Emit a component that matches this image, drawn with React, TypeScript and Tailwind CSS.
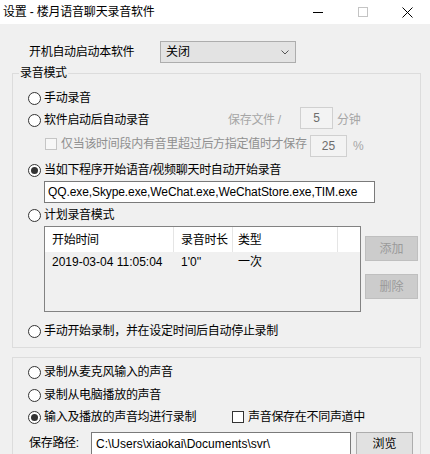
import React from "react";

const font = "font-['Liberation_Sans','Noto_Sans_CJK_SC',sans-serif]";

function Radio({ checked = false, label }: { checked?: boolean; label: string }) {
  return (
    <div className="flex items-center">
      <span className="w-[13px] h-[13px] rounded-full border border-[#333] bg-white flex items-center justify-center shrink-0">
        {checked && <span className="block w-[7px] h-[7px] rounded-full bg-[#333]"></span>}
      </span>
      <span className="ml-[3px] text-[12px] leading-[16px] tracking-[-0.3px] text-black whitespace-nowrap">{label}</span>
    </div>
  );
}

function Check({ label, disabled = false }: { label: string; disabled?: boolean }) {
  return (
    <div className="flex items-center">
      <span
        className={
          disabled
            ? "w-[12px] h-[12px] border border-[#c5c5c5] bg-[#f7f7f7] shrink-0"
            : "w-[12px] h-[12px] border border-[#333] bg-white shrink-0"
        }
      ></span>
      <span
        className={
          disabled
            ? "ml-[4px] text-[12px] leading-[16px] tracking-[-0.3px] text-[#8f8f8f] whitespace-nowrap"
            : "ml-[4px] text-[12px] leading-[16px] tracking-[-0.3px] text-black whitespace-nowrap"
        }
      >
        {label}
      </span>
    </div>
  );
}

export default function App() {
  return (
    <div className={`w-[430px] h-[454px] overflow-hidden flex flex-col bg-[#f0f0f0] ${font}`}>
      {/* title bar */}
      <div className="h-[24px] bg-white flex items-center shrink-0">
        <div className="pl-[3px] text-[12px] tracking-[-0.2px] text-black whitespace-nowrap">设置 - 楼月语音聊天录音软件</div>
        <div className="ml-auto flex h-full">
          <div className="w-[45px] h-full flex items-center justify-center">
            <svg width="10" height="10" viewBox="0 0 10 10"><line x1="0" y1="5.5" x2="10" y2="5.5" stroke="#000" strokeWidth="1" /></svg>
          </div>
          <div className="w-[45px] h-full flex items-center justify-center">
            <svg width="10" height="10" viewBox="0 0 10 10"><rect x="0.5" y="0.5" width="9" height="9" fill="none" stroke="#c4c4c4" strokeWidth="1" /></svg>
          </div>
          <div className="w-[45px] h-full flex items-center justify-center">
            <svg width="11" height="11" viewBox="0 0 11 11"><path d="M0.5 0.5 L10.5 10.5 M10.5 0.5 L0.5 10.5" stroke="#000" strokeWidth="1" /></svg>
          </div>
        </div>
      </div>

      {/* auto start */}
      <div className="mt-[17px] h-[22px] flex items-center">
        <div className="pl-[29px] w-[160px] text-[12px] tracking-[-0.3px] text-black">开机自动启动本软件</div>
        <div className="w-[136px] h-[22px] border border-[#adadad] bg-[#e3e3e3] flex items-center pl-[5px] pr-[6px]">
          <span className="text-[12px] text-black">关闭</span>
          <svg className="ml-auto" width="8" height="5" viewBox="0 0 8 5"><path d="M0.5 0.5 L4 4 L7.5 0.5" fill="none" stroke="#555" strokeWidth="1" /></svg>
        </div>
      </div>

      {/* group 1 */}
      <fieldset className="mt-[3px] ml-[12px] w-[409px] border border-[#dcdcdc] p-0 m-0">
        <legend className="ml-[6px] px-[1px] text-[12px] leading-[14px] tracking-[-0.3px] text-black">录音模式</legend>
        <div className="flex flex-col pl-[15px] pb-[6px]">
          <div className="mt-[9px] h-[18px] flex items-center">
            <Radio label="手动录音" />
          </div>

          <div className="h-[22px] flex items-center">
            <div className="w-[200px] pt-[4px]">
              <Radio label="软件启动后自动录音" />
            </div>
            <div className="w-[72px] text-[12px] tracking-[-0.3px] text-[#a6a6a6] whitespace-nowrap pt-[3px]">保存文件 /</div>
            <div className="w-[33px] h-[22px] border border-[#d0d0d0] bg-[#f3f3f3] flex items-center justify-center text-[12px] text-[#6d6d6d]">5</div>
            <div className="ml-[4px] text-[12px] tracking-[-0.3px] text-[#a6a6a6] pt-[3px]">分钟</div>
          </div>

          <div className="mt-[6px] h-[22px] flex items-center">
            <div className="w-[282px] pl-[17px] pb-[4px]">
              <Check disabled label="仅当该时间段内有音里超过后方指定值时才保存" />
            </div>
            <div className="w-[37px] h-[22px] border border-[#d0d0d0] bg-[#f3f3f3] flex items-center justify-center text-[12px] text-[#6d6d6d]">25</div>
            <div className="ml-[6px] text-[12px] text-[#a6a6a6]">%</div>
          </div>

          <div className="mt-[3px] h-[20px] flex items-center">
            <Radio checked label="当如下程序开始语音/视频聊天时自动开始录音" />
          </div>

          <div className="mt-[1px] ml-[16px] w-[331px] h-[22px] border border-[#7a7a7a] bg-white flex items-center pl-[3px] text-[12px] tracking-[-0.1px] text-black whitespace-nowrap overflow-hidden">
            QQ.exe,Skype.exe,WeChat.exe,WeChatStore.exe,TIM.exe
          </div>

          <div className="mt-[2px] h-[20px] flex items-center">
            <Radio label="计划录音模式" />
          </div>

          <div className="mt-[1px] flex">
            <div className="ml-[16px] w-[317px] h-[86px] border border-[#828282] bg-[#f0f0f0] flex flex-col">
              <div className="h-[25px] bg-white flex text-[12px] tracking-[-0.3px] text-black">
                <div className="w-[129px] pl-[7px] flex items-center border-r border-[#e5e5e5]">开始时间</div>
                <div className="w-[59px] pl-[7px] flex items-center border-r border-[#e5e5e5]">录音时长</div>
                <div className="w-[105px] pl-[5px] flex items-center border-r border-[#e5e5e5]">类型</div>
                <div className="flex-1"></div>
              </div>
              <div className="h-[20px] flex text-[12px] text-black">
                <div className="w-[129px] pl-[7px] flex items-center">2019-03-04 11:05:04</div>
                <div className="w-[59px] pl-[7px] flex items-center">1'0''</div>
                <div className="w-[105px] pl-[5px] flex items-center">一次</div>
              </div>
            </div>
            <div className="ml-[4px] flex flex-col">
              <div className="mt-[10px] w-[53px] h-[25px] border border-[#bfbfbf] bg-[#cccccc] flex items-center justify-center text-[12px] text-[#9a9a9a]">添加</div>
              <div className="mt-[13px] w-[53px] h-[25px] border border-[#bfbfbf] bg-[#cccccc] flex items-center justify-center text-[12px] text-[#9a9a9a]">删除</div>
            </div>
          </div>

          <div className="mt-[9px] h-[20px] flex items-center">
            <Radio label="手动开始录制，并在设定时间后自动停止录制" />
          </div>
        </div>
      </fieldset>

      {/* group 2 */}
      <div className="mt-[9px] ml-[12px] w-[409px] flex-1 border border-[#dcdcdc] flex flex-col pl-[15px]">
        <div className="mt-[4px] h-[20px] flex items-center">
          <Radio label="录制从麦克风输入的声音" />
        </div>
        <div className="mt-[3px] h-[20px] flex items-center">
          <Radio label="录制从电脑播放的声音" />
        </div>
        <div className="mt-[2px] h-[20px] flex items-center">
          <div className="w-[204px]">
            <Radio checked label="输入及播放的声音均进行录制" />
          </div>
          <Check label="声音保存在不同声道中" />
        </div>
        <div className="mt-[5px] flex items-start">
          <div className="w-[63px] pl-[1px] h-[22px] flex items-center text-[12px] tracking-[-0.3px] text-black">保存路径:</div>
          <div className="w-[260px] h-[24px] border border-[#7a7a7a] bg-white flex items-center pl-[4px] text-[12px] text-black whitespace-nowrap">
            C:\Users\xiaokai\Documents\svr\
          </div>
          <div className="ml-[5px] w-[57px] h-[24px] border border-[#adadad] bg-[#e1e1e1] flex items-center justify-center text-[12px] text-black">浏览</div>
        </div>
      </div>
    </div>
  );
}
